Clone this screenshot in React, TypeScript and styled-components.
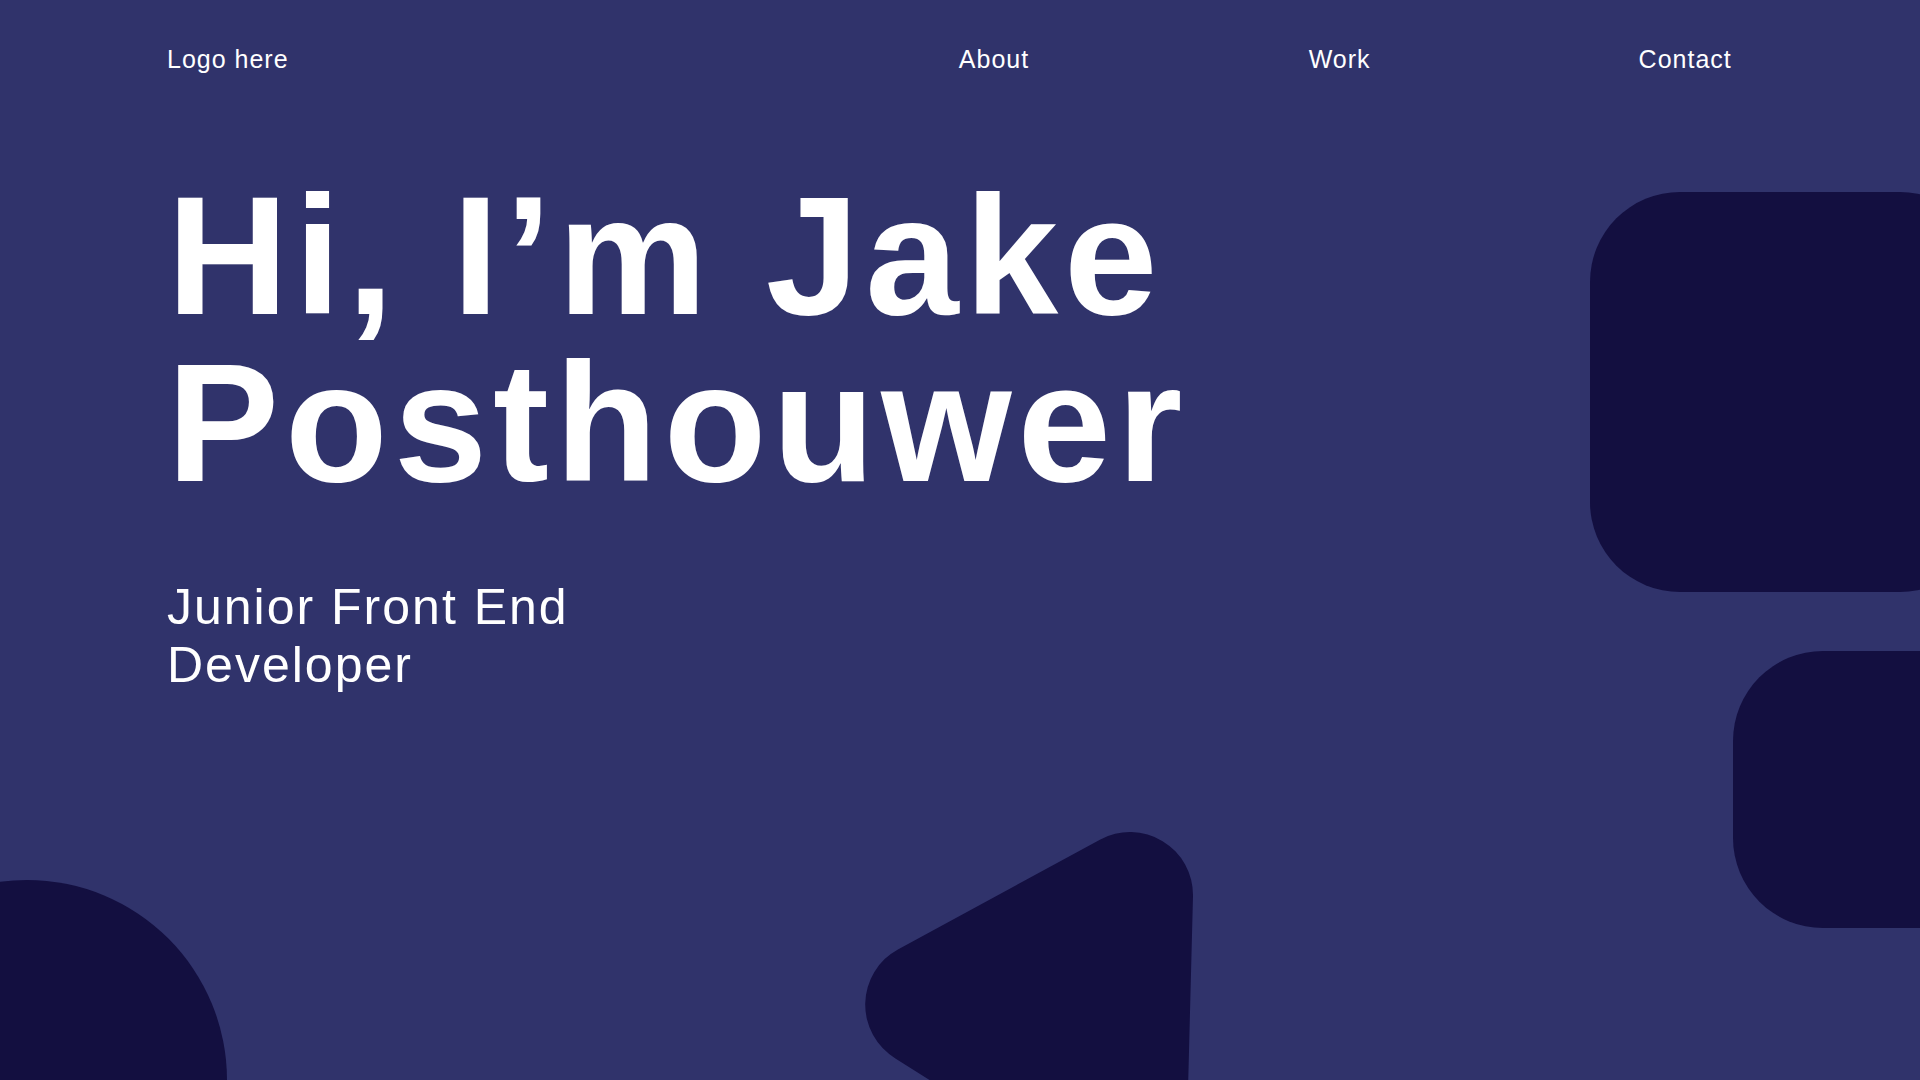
import React from "react";
import styled, { createGlobalStyle, ThemeProvider } from "styled-components";

const theme = {
  background: "#30336b",
  shape: "#130f40",
  text: "#ffffff",
  gutter: "167px",
};

const GlobalStyle = createGlobalStyle`
  *, *::before, *::after { box-sizing: border-box; }
  body {
    margin: 0;
    background: #30336b;
    font-family: Arial, "Liberation Sans", sans-serif;
  }
`;

const Page = styled.div`
  position: relative;
  isolation: isolate;
  display: flex;
  flex-direction: column;
  min-height: 100vh;
  overflow: hidden;
  background: ${(p) => p.theme.background};
  color: ${(p) => p.theme.text};
`;

const Header = styled.header`
  display: flex;
  align-items: center;
  justify-content: space-between;
  padding: 45px 62px 0 ${(p) => p.theme.gutter};
  font-size: 25px;
  line-height: 28px;
  letter-spacing: 1px;
`;

const TextLink = styled.a`
  color: inherit;
  text-decoration: none;

  &:hover {
    text-decoration: underline;
  }
`;

const NavList = styled.ul`
  display: grid;
  grid-template-columns: repeat(3, 1fr);
  width: 54vw;
  margin: 0;
  padding: 0;
  list-style: none;
  text-align: center;
`;

const Hero = styled.main`
  display: flex;
  flex-direction: column;
  gap: 71px;
  padding: 100px 62px 60px ${(p) => p.theme.gutter};
`;

const Title = styled.h1`
  max-width: 1100px;
  margin: 0;
  font-size: 168px;
  font-weight: 700;
  line-height: 167px;
  letter-spacing: 6px;
`;

const Role = styled.p`
  max-width: 440px;
  margin: 0;
  font-size: 50px;
  line-height: 58px;
  letter-spacing: 2px;
`;

const Backdrop = styled.div`
  position: absolute;
  inset: 0;
  z-index: -1;
  overflow: hidden;
`;

const RoundedBlock = styled.div<{ $top: number; $right: number; $width: number; $height: number }>`
  position: absolute;
  top: ${(p) => p.$top}px;
  right: ${(p) => p.$right}px;
  width: ${(p) => p.$width}px;
  height: ${(p) => p.$height}px;
  border-radius: 90px;
  background: ${(p) => p.theme.shape};
`;

const Circle = styled.div`
  position: absolute;
  left: -173px;
  bottom: -200px;
  width: 400px;
  height: 400px;
  border-radius: 50%;
  background: ${(p) => p.theme.shape};
`;

const Triangle = styled.svg`
  position: absolute;
  left: 865px;
  bottom: -112px;
  width: 330px;
  height: 360px;
  fill: ${(p) => p.theme.shape};
`;

const links = ["About", "Work", "Contact"];

export default function App() {
  return (
    <ThemeProvider theme={theme}>
      <GlobalStyle />
      <Page>
        <Backdrop aria-hidden="true">
          <RoundedBlock $top={192} $right={-70} $width={400} $height={400} />
          <RoundedBlock $top={651} $right={-90} $width={277} $height={277} />
          <Circle />
          <Triangle viewBox="0 0 330 360">
            <path d="M32.9 117.4 L234.9 7.7 A63 63 0 0 1 328 64 L322 297 A63 63 0 0 1 224 349 L30.4 226.4 A63 63 0 0 1 32.9 117.4 Z" />
          </Triangle>
        </Backdrop>
        <Header>
          <TextLink href="#home">Logo here</TextLink>
          <nav aria-label="Main">
            <NavList>
              {links.map((label) => (
                <li key={label}>
                  <TextLink href={`#${label.toLowerCase()}`}>{label}</TextLink>
                </li>
              ))}
            </NavList>
          </nav>
        </Header>
        <Hero>
          <Title>Hi, I’m Jake Posthouwer</Title>
          <Role>Junior Front End Developer</Role>
        </Hero>
      </Page>
    </ThemeProvider>
  );
}
